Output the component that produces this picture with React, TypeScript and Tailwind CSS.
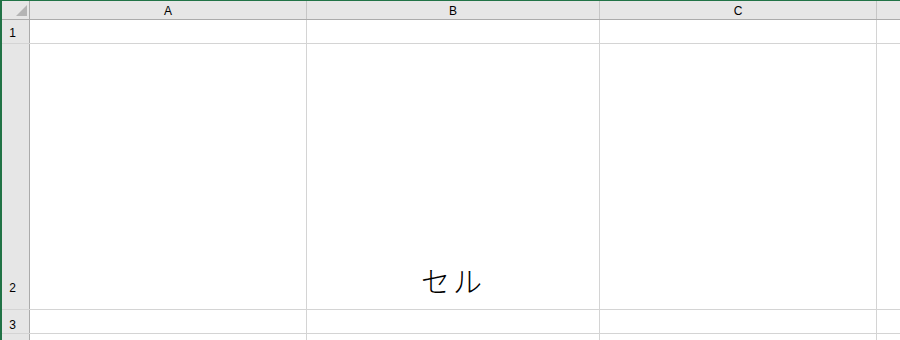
const cols = [
  { label: 'A', w: 'w-[277px]' },
  { label: 'B', w: 'w-[293px]' },
  { label: 'C', w: 'w-[277px]' },
]

const rows = [
  { n: '1', h: 'h-[24px]', pb: 'pb-[4px]', content: '' },
  { n: '2', h: 'h-[266px]', pb: 'pb-[15px]', content: 'セル' },
  { n: '3', h: 'h-[24px]', pb: 'pb-[2px]', content: '' },
  { n: '', h: 'h-[24px]', pb: 'pb-[2px]', content: '' },
]

export default function App() {
  return (
    <div
      className="w-[900px] h-[340px] overflow-hidden bg-white border-t border-l-2 border-[#217346] text-black"
      style={{ fontFamily: '"Liberation Sans", "Noto Sans CJK JP", sans-serif' }}
    >
      {/* 列見出し */}
      <div className="flex h-[19px] bg-[#e6e6e6] border-b border-[#ababab]">
        <div className="w-[28px] shrink-0 border-r border-[#ababab] relative">
          <svg className="absolute right-[2px] bottom-[3px]" width="11" height="11" viewBox="0 0 11 11">
            <polygon points="11,0 11,11 0,11" fill="#b4b4b4" />
          </svg>
        </div>
        {cols.map((c) => (
          <div
            key={c.label}
            className={`${c.w} shrink-0 border-r border-[#c6c6c6] flex items-center justify-center text-[12px] leading-none pt-px`}
          >
            {c.label}
          </div>
        ))}
        <div className="flex-1" />
      </div>

      {/* 行 */}
      {rows.map((r, ri) => (
        <div key={ri} className={`flex ${r.h} border-b border-[#d4d4d4]`}>
          <div
            className={`w-[28px] shrink-0 bg-[#e6e6e6] border-r border-[#ababab] flex items-end justify-center ${r.pb} pr-[6px] text-[12px] leading-none`}
          >
            {r.n}
          </div>
          {cols.map((c, i) => (
            <div
              key={c.label}
              className={`${c.w} shrink-0 border-r border-[#d4d4d4] flex items-end justify-center`}
            >
              {i === 1 && r.content ? (
                <span
                  className="text-[29px] leading-none pb-[14px] tracking-[3px] font-light"
                  style={{ fontFamily: '"Noto Sans CJK JP", sans-serif' }}
                >
                  {r.content}
                </span>
              ) : null}
            </div>
          ))}
          <div className="flex-1" />
        </div>
      ))}
    </div>
  )
}
